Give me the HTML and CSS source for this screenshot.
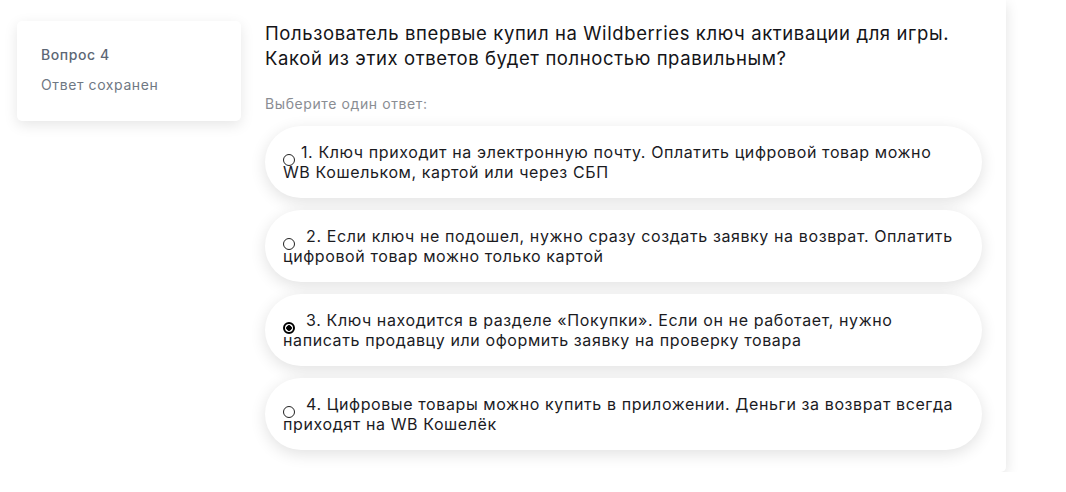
FILE: index.html
```html
<!DOCTYPE html>
<html lang="ru">
<head>
<meta charset="utf-8">
<title>Вопрос 4</title>
<link rel="stylesheet" href="styles.css">
</head>
<body>
<div class="card">
  <aside class="info">
    <div class="info-title">Вопрос 4</div>
    <div class="info-state">Ответ сохранен</div>
  </aside>
  <section class="content">
    <p class="question">Пользователь впервые купил на Wildberries ключ активации для игры. Какой из этих ответов будет полностью правильным?</p>
    <p class="prompt">Выберите один ответ:</p>
    <div class="options">
      <label class="option"><span class="radio"></span>1. Ключ приходит на электронную почту. Оплатить цифровой товар можно<br>WB Кошельком, картой или через СБП</label>
      <label class="option"><span class="radio"></span> 2. Если ключ не подошел, нужно сразу создать заявку на возврат. Оплатить<br>цифровой товар можно только картой</label>
      <label class="option"><span class="radio checked"></span> 3. Ключ находится в разделе «Покупки». Если он не работает, нужно<br>написать продавцу или оформить заявку на проверку товара</label>
      <label class="option"><span class="radio"></span> 4. Цифровые товары можно купить в приложении. Деньги за возврат всегда<br>приходят на WB Кошелёк</label>
    </div>
  </section>
</div>
</body>
</html>
```

FILE: styles.css
```css
* { box-sizing: border-box; }
html, body { margin: 0; padding: 0; background: #fff; }
body {
  font-family: Inter, "Noto Sans", sans-serif;
  color: #1b1b1f;
}
.card {
  width: 1006px;
  height: 472px;
  background: #fff;
  border-radius: 0 0 5px 0;
  box-shadow: 0 4px 14px rgba(0, 0, 0, 0.12);
  display: flex;
  align-items: flex-start;
  gap: 24px;
  padding: 21px 24px 23px 17px;
}
.info {
  width: 224px;
  flex: none;
  background: #fff;
  border-radius: 5px;
  box-shadow: 0 4px 14px rgba(0, 0, 0, 0.10);
  padding: 24px 24px 26px;
  font-size: 14px;
  line-height: 20px;
  letter-spacing: 0.6px;
}
.info-title { color: #5d6775; font-weight: 500; }
.info-state { color: #6f7883; margin-top: 10px; }
.content { flex: 1; min-width: 0; }
.question {
  margin: 0;
  font-size: 18.5px;
  line-height: 25px;
  letter-spacing: 0.6px;
  color: #141418;
}
.prompt {
  margin: 24px 0 0;
  font-size: 14px;
  line-height: 18px;
  letter-spacing: 0.6px;
  color: #8a8d93;
}
.options {
  margin-top: 13px;
  display: flex;
  flex-direction: column;
  gap: 12px;
}
.option {
  display: block;
  height: 72px;
  padding: 16px 8px 16px 18px;
  border-radius: 36px;
  background: #fff;
  box-shadow: 0 4px 16px rgba(0, 0, 0, 0.12);
  font-size: 16px;
  line-height: 20px;
  letter-spacing: 0.6px;
  color: #1b1b1f;
}
.radio {
  display: inline-block;
  width: 12px;
  height: 12px;
  border: 1px solid #222;
  border-radius: 50%;
  vertical-align: baseline;
  margin-bottom: -8px;
  margin-right: 6px;
  background: #fff;
}
.radio.checked {
  border: 2px solid #000;
  background: radial-gradient(circle, #000 0 2.5px, #fff 3px);
}
```
